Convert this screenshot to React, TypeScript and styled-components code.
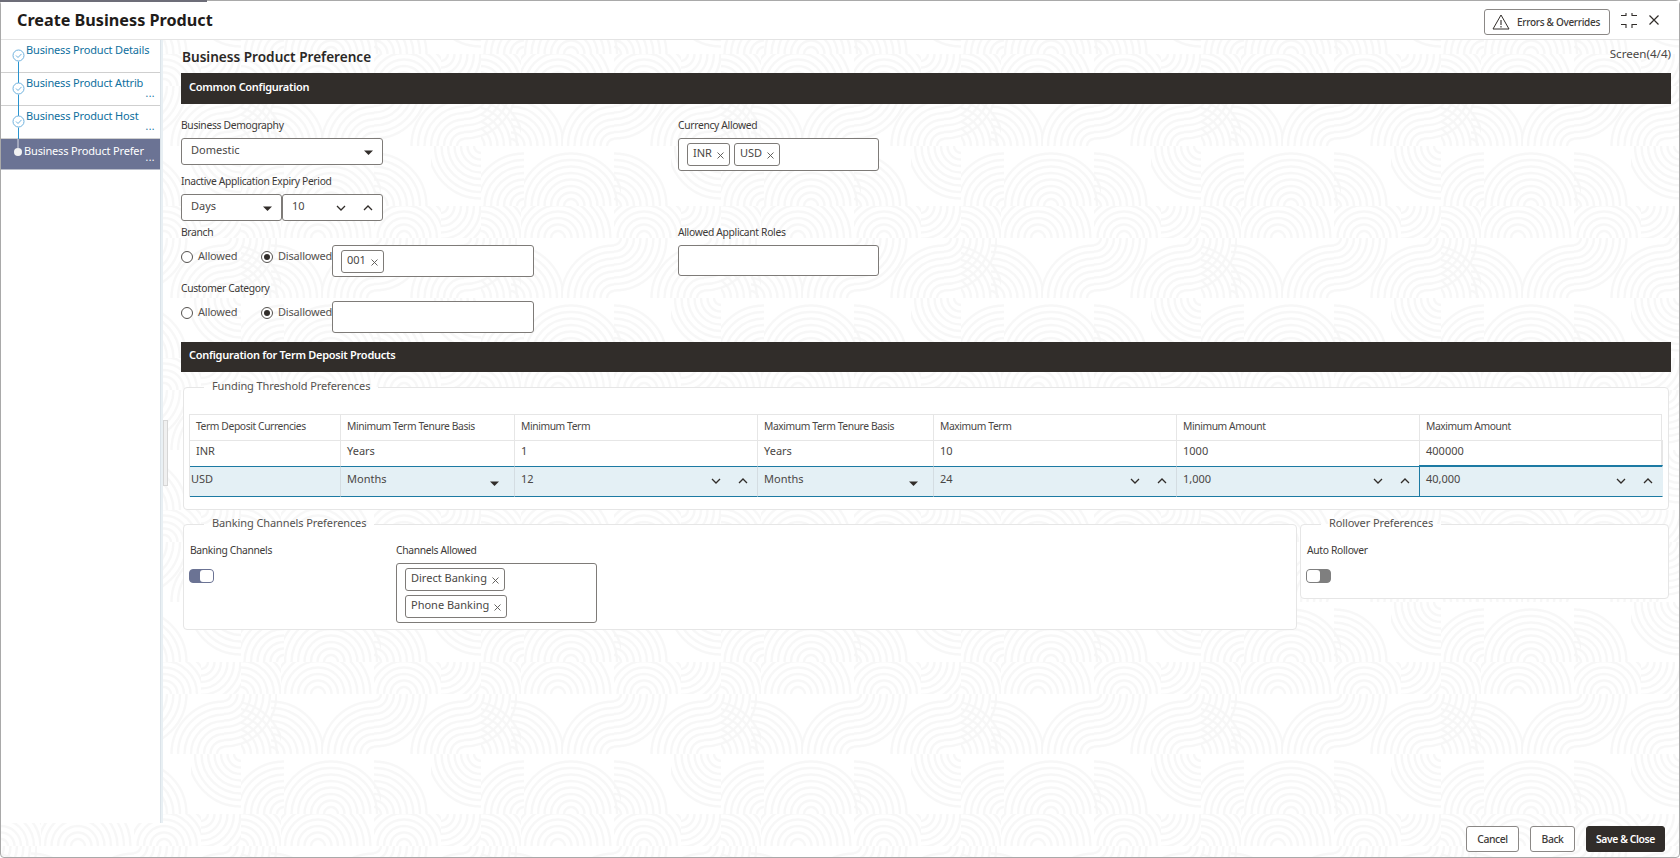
import React from "react";
import styled, { createGlobalStyle } from "styled-components";

let clipId = 0;
const arcs = (cx: number, cy: number, x: number, y: number, w: number, h: number) => {
  const id = `c${clipId++}`;
  const circles = [7, 13.500, 20, 26.500, 33, 39.500, 46, 52.500]
    .map((r) => `<circle cx="${cx}" cy="${cy}" r="${r}"/>`)
    .join("");
  return `<clipPath id="${id}"><rect x="${x}" y="${y}" width="${w}" height="${h}"/></clipPath><g clip-path="url(#${id})">${circles}</g>`;
};
const tile =
  `<svg xmlns="http://www.w3.org/2000/svg" width="240" height="152"><g fill="none" stroke="#f6f6f6" stroke-width="2.4" stroke-opacity=".85">` +
  arcs(-10, 60, 0, 0, 40, 60) +
  arcs(30, 60, 30, 0, 52, 60) +
  arcs(133, 60, 80, 0, 53, 60) +
  arcs(133, 0, 133, 0, 60, 60) +
  arcs(223, 60, 167, 0, 56, 60) +
  arcs(223, 0, 223, 0, 17, 60) +
  arcs(-17, 0, 0, 0, 36, 60) +
  arcs(43, 120, 0, 60, 43, 60) +
  arcs(90, 120, 43, 60, 97, 60) +
  arcs(133, 120, 133, 60, 57, 60) +
  arcs(240, 60, 190, 60, 50, 60) +
  arcs(77, 152, 40, 120, 37, 32) +
  arcs(77, 152, 77, 120, 56, 32) +
  arcs(163, 152, 133, 120, 67, 32) +
  arcs(200, 120, 200, 120, 40, 32) +
  arcs(0, 152, 0, 120, 40, 32) +
  `</g></svg>`;
const patternUrl = `url("data:image/svg+xml,${encodeURIComponent(tile)}")`;

const Global = createGlobalStyle`
  html, body { margin: 0; padding: 0; background: #fff; }
  body { font-family: "Noto Sans", "Open Sans", sans-serif; color: #3d3a38; }
  * { box-sizing: border-box; }
`;

const Modal = styled.div`
  position: relative;
  width: 1680px;
  height: 858px;
  display: flex;
  flex-direction: column;
  border: 1px solid #a9a9a9;
  border-radius: 4px;
  background: #fff ${patternUrl} 0 85px repeat;
`;
const Progress = styled.div`
  position: absolute;
  left: -1px;
  top: -1px;
  width: 207px;
  height: 2px;
  background: #6d6d78;
`;
const Header = styled.header`
  height: 39px;
  flex: none;
  display: flex;
  align-items: center;
  background: #fff;
  border-bottom: 1px solid #e4e4e4;
  padding: 0 20px 0 16px;
`;
const Title = styled.h1`
  margin: 0 auto 0 0;
  font-size: 16.2px;
  font-weight: 700;
  color: #1f1c1a;
`;
const ErrorsButton = styled.button`
  width: 126px;
  height: 26px;
  margin-top: 3px;
  display: flex;
  align-items: center;
  gap: 7px;
  padding: 0 7px;
  background: #fff;
  border: 1px solid #8b8886;
  border-radius: 3px;
  font: 500 10px "Noto Sans", sans-serif;
  letter-spacing: -0.3px;
  white-space: nowrap;
  color: #3d3a38;
`;
const HeaderIcon = styled.svg<{ $ml: number }>`
  flex: none;
  margin-left: ${(p) => p.$ml}px;
`;
const Body = styled.div`
  flex: 1;
  min-height: 0;
  display: flex;
`;
const Sidebar = styled.nav`
  width: 160px;
  flex: none;
  background: #fff;
  border-right: 1px solid #dbe3e9;
`;
const StepRow = styled.div<{ $active?: boolean; $h: number }>`
  height: ${(p) => p.$h}px;
  display: flex;
  align-items: flex-start;
  background: ${(p) => (p.$active ? "#6b7394" : "transparent")};
  border-bottom: 1px solid ${(p) => (p.$active ? "#b9bdca" : "#cfcfcf")};
  color: ${(p) => (p.$active ? "#fff" : "#0f6f9e")};
`;
const StepText = styled.span<{ $active?: boolean }>`
  margin-left: ${(p) => (p.$active ? "-2px" : "0")};
  padding-top: ${(p) => (p.$active ? "4px" : "2px")};
  font-size: 11px;
  letter-spacing: -0.16px;
  line-height: 16px;
  white-space: nowrap;
`;
const Dots = styled.span`
  margin-left: auto;
  padding: 0 5px 7px 0;
  align-self: flex-end;
  font-size: 10px;
  line-height: 10px;
  letter-spacing: 0.5px;
`;
const Main = styled.main`
  flex: 1;
  min-width: 0;
  position: relative;
  padding: 0 8px 0 18px;
  border-left: 2px solid #e9f0f4;
`;
const Handle = styled.div`
  position: absolute;
  left: 0;
  top: 380px;
  width: 5px;
  height: 66px;
  background: #f0f0f0;
  border: 1px solid #d6d6d6;
`;
const PageHead = styled.div`
  height: 33px;
  display: flex;
  justify-content: space-between;
  align-items: center;
`;
const PageTitle = styled.h2`
  margin: 0 0 0 1px;
  font-size: 13.6px;
  font-weight: 600;
  color: #2b2826;
`;
const ScreenNo = styled.span`
  font-size: 11.6px;
  margin-top: -6px;
  color: #4a4745;
`;
const Band = styled.div<{ $h: number; $mt?: number; $pb: number }>`
  height: ${(p) => p.$h}px;
  margin-top: ${(p) => p.$mt ?? 0}px;
  display: flex;
  align-items: center;
  padding: 0 0 ${(p) => p.$pb}px 8px;
  background: #312d2a;
  color: #fff;
  font-size: 11px;
  letter-spacing: -0.28px;
  font-weight: 600;
`;
const FormRow = styled.div<{ $mt: number }>`
  display: grid;
  grid-template-columns: 497px 201px;
  margin-top: ${(p) => p.$mt}px;
`;
const Label = styled.label`
  display: block;
  height: 16px;
  margin-bottom: 5px;
  font-size: 10.3px;
  letter-spacing: -0.32px;
  line-height: 16px;
  color: #3d3a38;
`;
const Box = styled.div<{ $w: number; $h: number; $flush?: boolean }>`
  width: ${(p) => p.$w}px;
  height: ${(p) => p.$h}px;
  display: flex;
  align-items: center;
  background: #fff;
  border: 1px solid #7e7b78;
  border-radius: 3px;
  padding: 0 ${(p) => (p.$flush ? "0" : "9px")} 5px 9px;
  font-size: 11px;
  color: #4a4745;
`;
const BoxValue = styled.span`
  margin-right: auto;
`;
const BoxCaret = styled.span`
  display: flex;
  margin-top: 7px;
`;
const InputPair = styled.div`
  display: flex;
`;
const ChipBox = styled.div<{ $w: number; $h: number; $stack?: boolean }>`
  width: ${(p) => p.$w}px;
  height: ${(p) => p.$h}px;
  display: flex;
  flex-direction: ${(p) => (p.$stack ? "column" : "row")};
  align-items: flex-start;
  gap: 4px;
  padding: 4px 8px;
  background: #fff;
  border: 1px solid #7e7b78;
  border-radius: 3px;
`;
const Chip = styled.span`
  height: 23px;
  display: inline-flex;
  align-items: center;
  gap: 5px;
  padding: 0 5px 4px;
  border: 1px solid #7e7b78;
  border-radius: 3px;
  font-size: 11px;
  color: #4a4745;
`;
const RadioLine = styled.div`
  display: flex;
  align-items: flex-start;
`;
const RadioItem = styled.span<{ $w: number }>`
  width: ${(p) => p.$w}px;
  display: flex;
  align-items: center;
  gap: 5px;
  font-size: 11px;
  letter-spacing: -0.2px;
  color: #55524f;
  height: 20px;
`;
const RadioDot = styled.span<{ $on?: boolean }>`
  flex: none;
  width: 12px;
  height: 12px;
  margin-top: 4px;
  border-radius: 50%;
  border: 1px solid #55524f;
  background: #fff;
  display: flex;
  align-items: center;
  justify-content: center;
  &::after {
    content: "";
    width: 6px;
    height: 6px;
    border-radius: 50%;
    background: ${(p) => (p.$on ? "#312d2a" : "transparent")};
  }
`;
const Panel = styled.fieldset<{ $grow?: boolean; $w?: number; $pb: number; $pt: number }>`
  min-width: 0;
  margin: 0;
  padding: ${(p) => p.$pt}px 5px ${(p) => p.$pb}px 5px;
  background: #fff;
  border: 1px solid #e6e6e6;
  border-radius: 4px;
  width: ${(p) => (p.$w ? `${p.$w}px` : "auto")};
  flex: ${(p) => (p.$grow ? "1" : "none")};
`;
const Legend = styled.legend`
  margin-left: 15px;
  padding: 0 8px;
  height: 16px;
  font-size: 11px;
  line-height: 14px;
  letter-spacing: -0.1px;
  color: #55524f;
`;
const PanelWrap = styled.div<{ $mt: number }>`
  margin: ${(p) => p.$mt}px 2px 0 2px;
`;
const TableGrid = styled.div`
  display: grid;
  grid-template-columns: 151px 174px 243px 176px 243px 243px 243px;
  border: 1px solid #e6e6e6;
  border-bottom: 0;
  width: 1473px;
`;
const HeadCell = styled.div`
  height: 26px;
  padding: 3px 6px 0;
  border-right: 1px solid #e6e6e6;
  border-bottom: 1px solid #e6e6e6;
  font-size: 10.3px;
  letter-spacing: -0.4px;
  line-height: 16px;
  color: #4a4745;
  &:nth-child(7) {
    border-right: 0;
  }
`;
const DataCell = styled(HeadCell)`
  height: 25px;
  padding-top: 2px;
  border-bottom: 0;
  font-size: 11px;
  letter-spacing: 0;
`;
const EditCell = styled.div<{ $focus?: boolean; $tight?: boolean }>`
  display: flex;
  align-items: flex-start;
  padding: 4px 0 0 ${(p) => (p.$tight ? "1px" : "6px")};
  background: #e4f0f5;
  border-top: ${(p) => (p.$focus ? "2px" : "1px")} solid #1c7aa3;
  border-bottom: 1px solid #1c7aa3;
  border-right: 1px solid ${(p) => (p.$focus ? "transparent" : "#d4dde2")};
  border-left: ${(p) => (p.$focus ? "1px solid #1c7aa3" : "0")};
  margin-left: ${(p) => (p.$focus ? "-1px" : "0")};
  margin-top: ${(p) => (p.$focus ? "-1px" : "0")};
  height: ${(p) => (p.$focus ? "32px" : "31px")};
  font-size: 11px;
  line-height: 16px;
  color: #4a4745;
`;
const Arrows = styled.span<{ $top: number }>`
  margin-left: auto;
  display: flex;
  align-items: center;
  gap: 17px;
  padding: ${(p) => p.$top}px 9px 0 0;
`;
const Carets = styled.span`
  margin-left: auto;
  padding: 4px 15px 0 0;
`;
const PanelRow = styled.div`
  display: flex;
  align-items: flex-start;
  gap: 3px;
  margin: 6px 2px 0 2px;
`;
const ChannelCols = styled.div`
  display: grid;
  grid-template-columns: 207px 201px;
`;
const FieldLabel = styled(Label)`
  padding-left: 1px;
`;
const Toggle = styled.span<{ $on?: boolean }>`
  display: flex;
  justify-content: ${(p) => (p.$on ? "flex-end" : "flex-start")};
  width: 25px;
  height: 14px;
  margin-top: 11px;
  border-radius: 4px;
  background: ${(p) => (p.$on ? "#6b7394" : "#7f7f7f")};
  border: 1px solid ${(p) => (p.$on ? "#6b7394" : "#7f7f7f")};
  &::after {
    content: "";
    width: 13px;
    height: 12px;
    border-radius: 3px;
    background: #fff;
  }
`;
const Footer = styled.footer`
  flex: none;
  height: 34px;
  display: flex;
  justify-content: flex-end;
  align-items: flex-start;
  gap: 11px;
  padding: 3px 14px 0 0;
`;
const FootButton = styled.button<{ $w: number; $primary?: boolean }>`
  width: ${(p) => p.$w}px;
  height: 26px;
  padding: 0;
  border: 1px solid ${(p) => (p.$primary ? "#312d2a" : "#8b8886")};
  border-radius: 3px;
  background: ${(p) => (p.$primary ? "#312d2a" : "#fff")};
  color: ${(p) => (p.$primary ? "#fff" : "#3d3a38")};
  font: ${(p) => (p.$primary ? 600 : 500)} 10.4px "Noto Sans", sans-serif;
  letter-spacing: -0.42px;
`;

const StepIcon = ({ top }: { top?: boolean }) => (
  <svg width="25" height="33" viewBox="0 0 25 33" fill="none" style={{ flex: "none" }}>
    {top && <path d="M17.5 0v10" stroke="#2a94cf" />}
    <path d="M17.500 21.500v11.500" stroke="#2a94cf" />
    <circle cx="17.5" cy="15.5" r="5.5" stroke="#6fb2de" />
    <path d="M15 15.500l2 2 3.500-3.600" stroke="#6fb2de" />
  </svg>
);
const ActiveIcon = () => (
  <svg width="25" height="30" viewBox="0 0 25 30" fill="none" style={{ flex: "none" }}>
    <path d="M17 0v9" stroke="#d9dbe3" />
    <circle cx="17" cy="13" r="4" fill="#f2f2f2" />
  </svg>
);
const Caret = () => (
  <svg width="9" height="6" viewBox="0 0 9 6">
    <path d="M0 0.5h9L4.500 5z" fill="#312d2a" />
  </svg>
);
const Down = () => (
  <svg width="10" height="6" viewBox="0 0 10 6" fill="none">
    <path d="M1 1l4 4 4-4" stroke="#312d2a" strokeWidth="1.3" />
  </svg>
);
const Up = () => (
  <svg width="10" height="6" viewBox="0 0 10 6" fill="none">
    <path d="M1 5l4-4 4 4" stroke="#312d2a" strokeWidth="1.3" />
  </svg>
);
const XMark = () => (
  <svg width="7" height="7" viewBox="0 0 7 7" style={{ marginTop: 5 }}>
    <path d="M.5.5l6 6M6.500.5l-6 6" stroke="#55524f" strokeWidth=".9" />
  </svg>
);
const Tag = ({ children }: { children: string }) => (
  <Chip>
    {children}
    <XMark />
  </Chip>
);
const Stepper = ({ top }: { top: number }) => (
  <Arrows $top={top}>
    <Down />
    <Up />
  </Arrows>
);

const heads = [
  "Term Deposit Currencies",
  "Minimum Term Tenure Basis",
  "Minimum Term",
  "Maximum Term Tenure Basis",
  "Maximum Term",
  "Minimum Amount",
  "Maximum Amount",
];
const inr = ["INR", "Years", "1", "Years", "10", "1000", "400000"];

const Radios = () => (
  <RadioLine>
    <RadioItem $w={80}>
      <RadioDot />
      Allowed
    </RadioItem>
    <RadioItem $w={71}>
      <RadioDot $on />
      Disallowed
    </RadioItem>
  </RadioLine>
);

export default function App() {
  return (
    <Modal>
      <Global />
      <Progress />
      <Header>
        <Title>Create Business Product</Title>
        <ErrorsButton>
          <svg width="18" height="16" viewBox="0 0 18 16" fill="none" style={{ flex: "none" }}>
            <path d="M9 1L1 15h16z" stroke="#312d2a" strokeLinejoin="round" />
            <path d="M9 6v5M9 12v1.600" stroke="#312d2a" strokeWidth="1.1" />
          </svg>
          Errors &amp; Overrides
        </ErrorsButton>
        <HeaderIcon $ml={11} width="16" height="15" viewBox="0 0 16 15" fill="none">
          <path d="M0 2.500h5V0M11 0v2.500h5M0 11.500h5V15M16 11.500h-5V15" stroke="#312d2a" strokeWidth="1.1" />
        </HeaderIcon>
        <HeaderIcon $ml={12} width="10" height="10" viewBox="0 0 10 10" fill="none">
          <path d="M.5.5l9 9M9.500.5l-9 9" stroke="#312d2a" strokeWidth="1.2" />
        </HeaderIcon>
      </Header>
      <Body>
        <Sidebar>
          <StepRow $h={33}>
            <StepIcon />
            <StepText>Business Product Details</StepText>
          </StepRow>
          <StepRow $h={33}>
            <StepIcon top />
            <StepText>Business Product Attrib</StepText>
            <Dots>...</Dots>
          </StepRow>
          <StepRow $h={33}>
            <StepIcon top />
            <StepText>Business Product Host</StepText>
            <Dots>...</Dots>
          </StepRow>
          <StepRow $h={31} $active>
            <ActiveIcon />
            <StepText $active>Business Product Prefer</StepText>
            <Dots>...</Dots>
          </StepRow>
        </Sidebar>
        <Main>
          <Handle />
          <PageHead>
            <PageTitle>Business Product Preference</PageTitle>
            <ScreenNo>Screen(4/4)</ScreenNo>
          </PageHead>
          <Band $h={31} $pb={5}>Common Configuration</Band>

          <FormRow $mt={13}>
            <div>
              <Label>Business Demography</Label>
              <Box $w={202} $h={27}>
                <BoxValue>Domestic</BoxValue>
                <BoxCaret>
                  <Caret />
                </BoxCaret>
              </Box>
            </div>
            <div>
              <Label>Currency Allowed</Label>
              <ChipBox $w={201} $h={33}>
                <Tag>INR</Tag>
                <Tag>USD</Tag>
              </ChipBox>
            </div>
          </FormRow>

          <FormRow $mt={2}>
            <div>
              <Label>Inactive Application Expiry Period</Label>
              <InputPair>
                <Box $w={101} $h={27}>
                  <BoxValue>Days</BoxValue>
                  <BoxCaret>
                    <Caret />
                  </BoxCaret>
                </Box>
                <Box $w={101} $h={27} $flush>
                  <BoxValue>10</BoxValue>
                  <Stepper top={6} />
                </Box>
              </InputPair>
            </div>
          </FormRow>

          <FormRow $mt={3}>
            <div>
              <Label>Branch</Label>
              <InputPair>
                <Radios />
                <ChipBox $w={202} $h={32}>
                  <Tag>001</Tag>
                </ChipBox>
              </InputPair>
            </div>
            <div>
              <Label>Allowed Applicant Roles</Label>
              <ChipBox $w={201} $h={31} />
            </div>
          </FormRow>

          <FormRow $mt={3}>
            <div>
              <Label>Customer Category</Label>
              <InputPair>
                <Radios />
                <ChipBox $w={202} $h={32} />
              </InputPair>
            </div>
          </FormRow>

          <Band $h={30} $mt={9} $pb={6}>Configuration for Term Deposit Products</Band>

          <PanelWrap $mt={7}>
            <Panel $pt={19} $pb={12}>
              <Legend>Funding Threshold Preferences</Legend>
              <TableGrid>
                {heads.map((h) => (
                  <HeadCell key={h}>{h}</HeadCell>
                ))}
                {inr.map((v, i) => (
                  <DataCell key={i}>{v}</DataCell>
                ))}
                <EditCell $tight>USD</EditCell>
                <EditCell>
                  Months
                  <Carets>
                    <Caret />
                  </Carets>
                </EditCell>
                <EditCell>
                  12
                  <Stepper top={7} />
                </EditCell>
                <EditCell>
                  Months
                  <Carets>
                    <Caret />
                  </Carets>
                </EditCell>
                <EditCell>
                  24
                  <Stepper top={7} />
                </EditCell>
                <EditCell>
                  1,000
                  <Stepper top={7} />
                </EditCell>
                <EditCell $focus>
                  40,000
                  <Stepper top={7} />
                </EditCell>
              </TableGrid>
            </Panel>
          </PanelWrap>

          <PanelRow>
            <Panel $w={1114} $pt={10} $pb={6}>
              <Legend>Banking Channels Preferences</Legend>
              <ChannelCols>
                <div>
                  <FieldLabel>Banking Channels</FieldLabel>
                  <Toggle $on />
                </div>
                <div>
                  <Label>Channels Allowed</Label>
                  <ChipBox $w={201} $h={60} $stack>
                    <Tag>Direct Banking</Tag>
                    <Tag>Phone Banking</Tag>
                  </ChipBox>
                </div>
              </ChannelCols>
            </Panel>
            <Panel $grow $pt={10} $pb={15}>
              <Legend>Rollover Preferences</Legend>
              <FieldLabel>Auto Rollover</FieldLabel>
              <Toggle />
            </Panel>
          </PanelRow>
        </Main>
      </Body>
      <Footer>
        <FootButton $w={53}>Cancel</FootButton>
        <FootButton $w={45}>Back</FootButton>
        <FootButton $w={79} $primary>Save &amp; Close</FootButton>
      </Footer>
    </Modal>
  );
}
